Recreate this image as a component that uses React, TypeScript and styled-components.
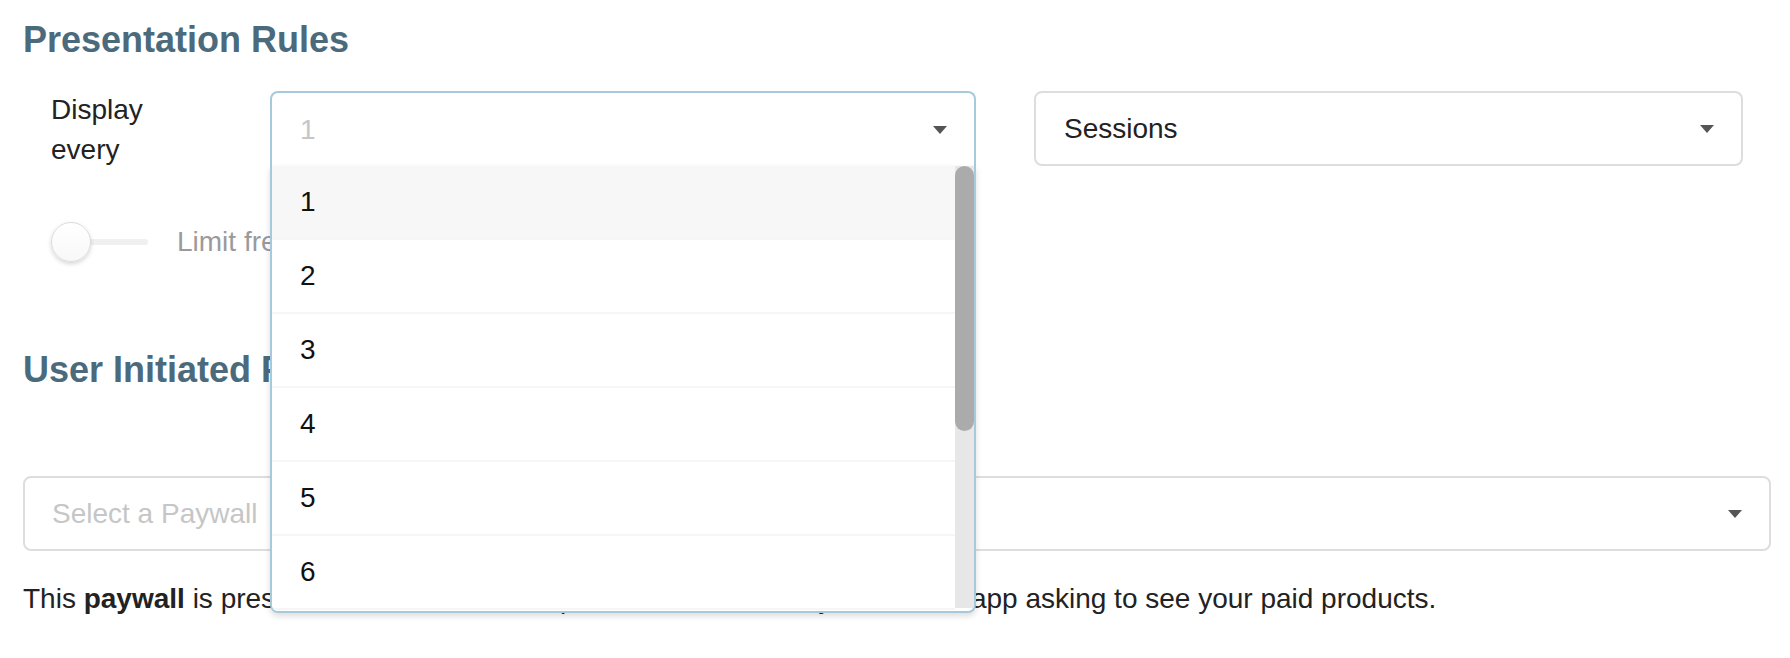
import React from "react";
import styled, { createGlobalStyle } from "styled-components";

const GlobalStyle = createGlobalStyle`
  html, body {
    margin: 0;
    padding: 0;
    background: #fff;
  }
  body {
    font-family: "Liberation Sans", Arial, Helvetica, sans-serif;
    font-size: 28px;
    line-height: 40px;
    color: #222;
  }
`;

const Page = styled.div`
  box-sizing: border-box;
  width: 1790px;
  height: 658px;
  padding: 20px 19px 0 23px;
  overflow: hidden;
`;

const SectionTitle = styled.h4<{ $gap?: number }>`
  margin: ${(p) => p.$gap ?? 0}px 0 0;
  font-size: 36px;
  line-height: 40px;
  font-weight: 700;
  color: #4b6b7c;
`;

const FieldRow = styled.div`
  display: flex;
  align-items: flex-start;
  margin-top: 31px;
`;

const LabelCell = styled.div`
  box-sizing: border-box;
  flex: 0 0 247px;
  padding-left: 28px;
  margin-top: -1px;
`;

const LabelText = styled.span`
  display: block;
  width: 120px;
  color: #222;
`;

const SelectCell = styled.div<{ $width: number; $offset?: number }>`
  position: relative;
  flex: 0 0 ${(p) => p.$width}px;
  margin-left: ${(p) => p.$offset ?? 0}px;
`;

const SelectBox = styled.div<{ $open?: boolean; $padLeft?: number }>`
  box-sizing: border-box;
  display: flex;
  align-items: center;
  justify-content: space-between;
  height: 75px;
  padding: 0 27px 0 ${(p) => p.$padLeft ?? 28}px;
  background: #fff;
  border: 2px solid ${(p) => (p.$open ? "#a6cadb" : "#dddddd")};
  border-bottom-width: ${(p) => (p.$open ? 0 : 2)}px;
  border-radius: ${(p) => (p.$open ? "8px 8px 0 0" : "8px")};
`;

const SelectValue = styled.span<{ $placeholder?: boolean }>`
  color: ${(p) => (p.$placeholder ? "#c6c6c6" : "#222")};
`;

const Caret = styled.span`
  width: 0;
  height: 0;
  border-left: 7px solid transparent;
  border-right: 7px solid transparent;
  border-top: 8px solid #555;
`;

const Menu = styled.div`
  box-sizing: border-box;
  position: absolute;
  top: 100%;
  left: 0;
  right: 0;
  height: 447px;
  overflow: hidden;
  background: #fff;
  border: 2px solid #a6cadb;
  border-top: 0;
  border-radius: 0 0 8px 8px;
  box-shadow: 0 3px 6px rgba(0, 0, 0, 0.14);
  z-index: 10;
`;

const OptionList = styled.div`
  margin-right: 19px;
`;

const Option = styled.div<{ $active?: boolean }>`
  box-sizing: border-box;
  display: flex;
  align-items: center;
  height: 74px;
  padding-left: 28px;
  color: #111;
  background: ${(p) => (p.$active ? "#f7f7f7" : "#fff")};
  border-bottom: 2px solid #f6f6f6;
`;

/* drawn scrollbar, sits over the right edge of the open menu */
const ScrollTrack = styled.div`
  position: absolute;
  top: 0;
  right: 0;
  bottom: 3px;
  width: 19px;
  background: #e7e7e7;
`;

const ScrollThumb = styled.div`
  height: 265px;
  border-radius: 10px;
  background: #ababab;
`;

const ToggleRow = styled.div`
  display: flex;
  align-items: center;
  margin-top: 52px;
  padding-left: 28px;
`;

const Switch = styled.div`
  position: relative;
  width: 97px;
  height: 40px;

  &::before {
    content: "";
    position: absolute;
    left: 20px;
    right: 0;
    top: 17px;
    height: 6px;
    border-radius: 3px;
    background: #f0f0f0;
  }
`;

const Knob = styled.span`
  position: absolute;
  left: 0;
  top: 0;
  box-sizing: border-box;
  width: 40px;
  height: 40px;
  border-radius: 50%;
  background: linear-gradient(#fff, #f8f8f8);
  border: 1px solid #dcdcdc;
  box-shadow: 0 2px 4px rgba(0, 0, 0, 0.16);
`;

const ToggleLabel = styled.span`
  margin-left: 29px;
  color: #9a9a9a;
`;

const PaywallSelect = styled.div`
  margin-top: 86px;
`;

const HelpText = styled.p`
  margin: 28px 0 0;
  color: #222;

  b {
    font-weight: 700;
  }
`;

const options = [1, 2, 3, 4, 5, 6, 7, 8, 9, 10];

export default function App() {
  return (
    <>
      <GlobalStyle />
      <Page>
        <SectionTitle>Presentation Rules</SectionTitle>
        <FieldRow>
          <LabelCell>
            <LabelText>Display every</LabelText>
          </LabelCell>
          <SelectCell $width={706}>
            <SelectBox $open>
              <SelectValue $placeholder>1</SelectValue>
              <Caret />
            </SelectBox>
            <Menu>
              <OptionList>
                {options.map((n) => (
                  <Option key={n} $active={n === 1}>
                    {n}
                  </Option>
                ))}
              </OptionList>
              <ScrollTrack>
                <ScrollThumb />
              </ScrollTrack>
            </Menu>
          </SelectCell>
          <SelectCell $width={709} $offset={58}>
            <SelectBox>
              <SelectValue>Sessions</SelectValue>
              <Caret />
            </SelectBox>
          </SelectCell>
        </FieldRow>

        <ToggleRow>
          <Switch>
            <Knob />
          </Switch>
          <ToggleLabel>Limit frequency</ToggleLabel>
        </ToggleRow>

        <SectionTitle $gap={88}>User Initiated Paywall</SectionTitle>
        <PaywallSelect>
          <SelectBox $padLeft={27}>
            <SelectValue $placeholder>Select a Paywall</SelectValue>
            <Caret />
          </SelectBox>
        </PaywallSelect>
        <HelpText>
          This <b>paywall</b> is presented when the user taps a button inside of your mobile app
          asking to see your paid products.
        </HelpText>
      </Page>
    </>
  );
}
